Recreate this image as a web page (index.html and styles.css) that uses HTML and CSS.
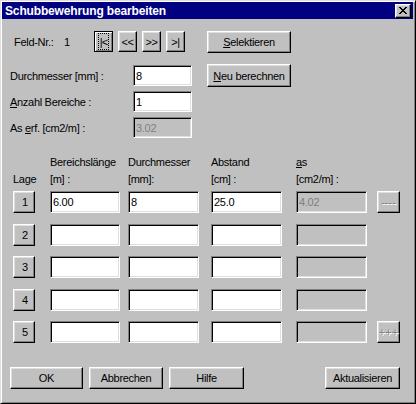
FILE: index.html
```html
<!DOCTYPE html>
<html>
<head>
<meta charset="utf-8">
<title>Schubbewehrung bearbeiten</title>
<link rel="stylesheet" href="styles.css">
</head>
<body>
<div class="win">
  <div class="titlebar">
    <span class="title">Schubbewehrung bearbeiten</span>
    <div class="btn close"><svg width="8" height="7" viewBox="0 0 8 7" shape-rendering="crispEdges"><path d="M0 0h2v1H0zM6 0h2v1H6zM1 1h2v1H1zM5 1h2v1H5zM2 2h4v1H2zM3 3h2v1H3zM2 4h4v1H2zM1 5h2v1H1zM5 5h2v1H5zM0 6h2v1H0zM6 6h2v1H6z" fill="#000"/></svg></div>
  </div>

  <div class="toprow">
    <span class="feld">Feld-Nr.:</span>
    <span class="feldval">1</span>
    <div class="nav">
      <div class="btn navb default"><span class="focus">|&lt;</span></div>
      <div class="btn navb">&lt;&lt;</div>
      <div class="btn navb">&gt;&gt;</div>
      <div class="btn navb">&gt;|</div>
    </div>
    <div class="btn wide sel"><u>S</u>elektieren</div>
  </div>

  <div class="form">
    <span class="lbl">Durchmesser [mm] :</span>
    <div class="edit fe">8</div>
    <div class="btn wide neu"><u>N</u>eu berechnen</div>

    <span class="lbl"><u>A</u>nzahl Bereiche :</span>
    <div class="edit fe">1</div>
    <span></span>

    <span class="lbl">As <u>e</u>rf. [cm2/m] :</span>
    <div class="edit fe dis">3.02</div>
    <span></span>
  </div>

  <div class="thead">
    <span></span>
    <span>Bereichslänge</span>
    <span>Durchmesser</span>
    <span>Abstand</span>
    <span><u>a</u>s</span>
    <span></span>

    <span>Lage</span>
    <span>[m] :</span>
    <span>[mm]:</span>
    <span>[cm] :</span>
    <span>[cm2/m] :</span>
    <span></span>
  </div>

  <div class="tbody">
    <div class="btn lage">1</div>
    <div class="edit c1">6.00</div>
    <div class="edit c2">8</div>
    <div class="edit c3">25.0</div>
    <div class="edit c4 dis">4.02</div>
    <div class="btn small grey">----</div>

    <div class="btn lage">2</div>
    <div class="edit c1"></div>
    <div class="edit c2"></div>
    <div class="edit c3"></div>
    <div class="edit c4 dis"></div>
    <span></span>

    <div class="btn lage">3</div>
    <div class="edit c1"></div>
    <div class="edit c2"></div>
    <div class="edit c3"></div>
    <div class="edit c4 dis"></div>
    <span></span>

    <div class="btn lage">4</div>
    <div class="edit c1"></div>
    <div class="edit c2"></div>
    <div class="edit c3"></div>
    <div class="edit c4 dis"></div>
    <span></span>

    <div class="btn lage">5</div>
    <div class="edit c1"></div>
    <div class="edit c2"></div>
    <div class="edit c3"></div>
    <div class="edit c4 dis"></div>
    <div class="btn small grey">+++</div>
  </div>

  <div class="footer">
    <div class="btn ok">OK</div>
    <div class="btn abb">Abbrechen</div>
    <div class="btn hilfe">Hilfe</div>
    <div class="btn akt">Aktualisieren</div>
  </div>
</div>
</body>
</html>
```

FILE: styles.css
```css
* { box-sizing: border-box; }
html, body { margin: 0; padding: 0; background: #c0c0c0; }
body {
  font-family: "Liberation Sans", Arial, sans-serif;
  font-size: 11px;
  letter-spacing: -0.3px;
  color: #000;
}
u { text-decoration: underline; text-underline-offset: 1px; }

.win {
  width: 416px;
  height: 404px;
  background: #c0c0c0;
  border: 1px solid;
  border-color: #dfdfdf #000 #000 #dfdfdf;
  box-shadow: inset 1px 1px #fff, inset -1px -1px #808080;
  padding: 1px 2px 0 1px;
  display: flex;
  flex-direction: column;
}

.titlebar {
  flex: none;
  height: 17px;
  background: #000080;
  display: flex;
  align-items: center;
  justify-content: space-between;
  padding: 0 2px 0 3px;
}
.title {
  color: #fff;
  font-weight: bold;
  font-size: 12px;
  letter-spacing: -0.15px;
}

.btn {
  background: #c0c0c0;
  color: #000;
  border: 1px solid;
  border-color: #fff #000 #000 #fff;
  box-shadow: inset -1px -1px #808080, inset 1px 1px #dfdfdf;
  display: flex;
  align-items: center;
  justify-content: center;
  white-space: nowrap;
}
.close { width: 16px; height: 14px; }

.toprow {
  flex: none;
  display: flex;
  align-items: center;
  height: 22px;
  margin-top: 12px;
  padding-left: 12px;
}
.feld { width: 50px; }
.feldval { width: 30px; }
.nav { display: flex; gap: 5px; align-self: flex-start; }
.navb { width: 19px; height: 21px; }
.default {
  border-color: #000;
  box-shadow: inset 1px 1px #fff, inset -1px -1px #808080;
}
.focus {
  width: 11px;
  height: 17px;
  border: 1px dotted #000;
  display: flex;
  align-items: center;
  justify-content: center;
  letter-spacing: -1px;
}
.wide { width: 84px; height: 22px; }
.sel { margin-left: 22px; }

.form {
  flex: none;
  display: grid;
  grid-template-columns: 123px 74px 84px;
  grid-auto-rows: 21px;
  row-gap: 5px;
  margin-top: 12px;
  padding-left: 8px;
  align-items: center;
}
.neu { height: 23px; align-self: start; margin-top: -1px; }

.edit {
  background: #fff;
  border: 1px solid;
  border-color: #808080 #fff #fff #808080;
  box-shadow: inset 1px 1px #000, inset -1px -1px #dfdfdf;
  padding: 0 2px;
  display: flex;
  align-items: center;
  height: 22px;
}
.fe { width: 59px; height: 21px; }
.dis { background: #c0c0c0; color: #808080; }

.thead, .tbody {
  flex: none;
  display: grid;
  grid-template-columns: 37px 78px 83px 85px 81px 23px;
  padding-left: 11px;
}
.thead {
  margin-top: 16px;
  grid-auto-rows: 17px;
  line-height: 17px;
}
.tbody {
  margin-top: 3px;
  grid-auto-rows: 22px;
  row-gap: 10.5px;
}
.lage { width: 22px; height: 22px; padding-left: 2px; }
.c1 { width: 70px; }
.c2 { width: 71px; }
.c3 { width: 71px; }
.c4 { width: 71px; }
.small { width: 23px; height: 22px; }
.grey { color: #808080; text-shadow: 1px 1px #fff; letter-spacing: 0; }

.footer {
  flex: none;
  display: flex;
  gap: 6px;
  margin-top: 24px;
  padding: 0 13px 0 8px;
}
.footer .btn { height: 22px; }
.ok { width: 73px; }
.abb { width: 74px; }
.hilfe { width: 75px; }
.akt { width: 75px; margin-left: auto; }
```
